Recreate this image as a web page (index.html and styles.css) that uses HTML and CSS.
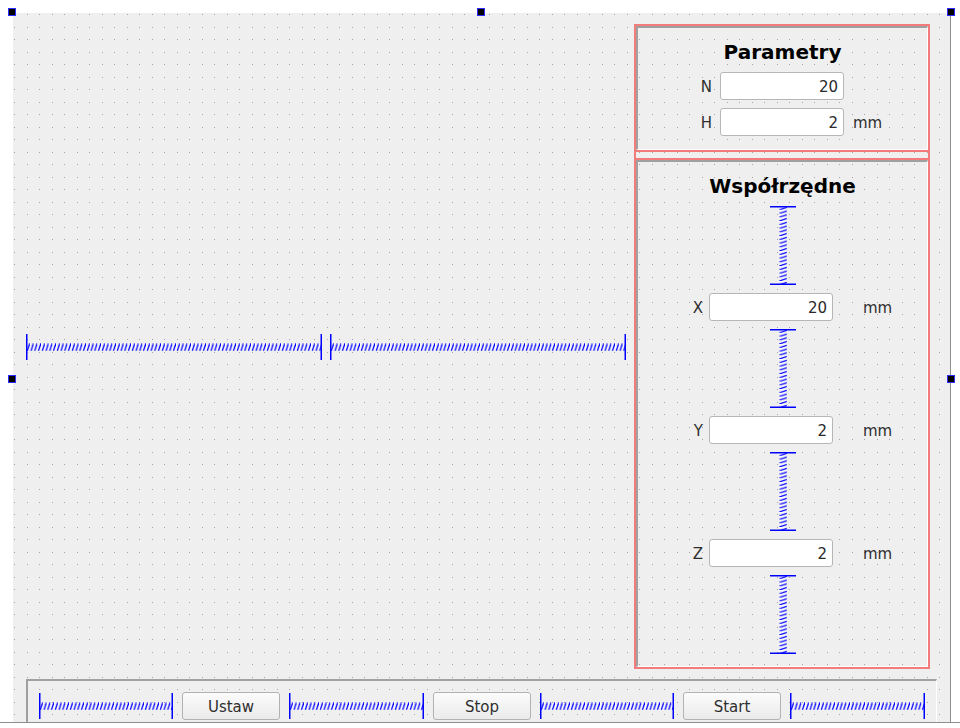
FILE: index.html
```html
<!DOCTYPE html>
<html lang="pl">
<head>
<meta charset="utf-8">
<title>Form</title>
<link rel="stylesheet" href="styles.css">
</head>
<body>
<svg class="defs" width="0" height="0" aria-hidden="true">
  <defs>
    <pattern id="hc" patternUnits="userSpaceOnUse" x="0" y="0" width="3.75" height="26">
      <line x1="0" y1="9.25" x2="1.25" y2="16.75" stroke="#ffffff" stroke-width="1.2"/>
      <line x1="1.25" y1="16.75" x2="3.75" y2="9.25" stroke="#0000ff" stroke-width="1.2"/>
    </pattern>
    <pattern id="vc" patternUnits="userSpaceOnUse" x="0" y="0" width="26" height="3.75">
      <line x1="9.25" y1="0" x2="16.75" y2="1.25" stroke="#ffffff" stroke-width="1.2"/>
      <line x1="16.75" y1="1.25" x2="9.25" y2="3.75" stroke="#0000ff" stroke-width="1.2"/>
    </pattern>
  </defs>
</svg>

<div class="viewport">
  <div class="form">
    <div class="main">
      <div class="left">
        <svg class="hs" width="296" height="26" viewBox="0 0 296 26"><rect x="0" y="8" width="296" height="10" fill="url(#hc)"/><line class="cap" x1="0.75" y1="0" x2="0.75" y2="26"/><line class="cap" x1="295.25" y1="0" x2="295.25" y2="26"/></svg>
        <svg class="hs" width="296" height="26" viewBox="0 0 296 26"><rect x="0" y="8" width="296" height="10" fill="url(#hc)"/><line class="cap" x1="0.75" y1="0" x2="0.75" y2="26"/><line class="cap" x1="295.25" y1="0" x2="295.25" y2="26"/></svg>
      </div>
      <div class="panel">
        <div class="box box1">
          <div class="frame">
            <div class="title">Parametry</div>
            <div class="pgrid">
              <span class="lbl">N</span><div class="input">20</div><span class="unit"></span>
              <span class="lbl">H</span><div class="input">2</div><span class="unit">mm</span>
            </div>
          </div>
        </div>
        <div class="box box2">
          <div class="frame">
            <div class="title">Współrzędne</div>
            <svg class="vs" width="26" height="79" viewBox="0 0 26 79"><rect x="8" y="0" width="10" height="79" fill="url(#vc)"/><line class="cap" x1="0" y1="0.75" x2="26" y2="0.75"/><line class="cap" x1="0" y1="78.25" x2="26" y2="78.25"/></svg>
            <div class="crow"><span class="lbl">X</span><div class="input">20</div><span class="unit">mm</span></div>
            <svg class="vs" width="26" height="79" viewBox="0 0 26 79"><rect x="8" y="0" width="10" height="79" fill="url(#vc)"/><line class="cap" x1="0" y1="0.75" x2="26" y2="0.75"/><line class="cap" x1="0" y1="78.25" x2="26" y2="78.25"/></svg>
            <div class="crow"><span class="lbl">Y</span><div class="input">2</div><span class="unit">mm</span></div>
            <svg class="vs" width="26" height="79" viewBox="0 0 26 79"><rect x="8" y="0" width="10" height="79" fill="url(#vc)"/><line class="cap" x1="0" y1="0.75" x2="26" y2="0.75"/><line class="cap" x1="0" y1="78.25" x2="26" y2="78.25"/></svg>
            <div class="crow"><span class="lbl">Z</span><div class="input">2</div><span class="unit">mm</span></div>
            <svg class="vs" width="26" height="79" viewBox="0 0 26 79"><rect x="8" y="0" width="10" height="79" fill="url(#vc)"/><line class="cap" x1="0" y1="0.75" x2="26" y2="0.75"/><line class="cap" x1="0" y1="78.25" x2="26" y2="78.25"/></svg>
          </div>
        </div>
      </div>
    </div>
    <div class="bottom">
      <svg class="bs" width="134" height="26" viewBox="0 0 134 26"><rect x="0" y="8" width="134" height="10" fill="url(#hc)"/><line class="cap" x1="0.75" y1="0" x2="0.75" y2="26"/><line class="cap" x1="133.25" y1="0" x2="133.25" y2="26"/></svg>
      <div class="btn">Ustaw</div>
      <svg class="bs" width="135" height="26" viewBox="0 0 135 26"><rect x="0" y="8" width="135" height="10" fill="url(#hc)"/><line class="cap" x1="0.75" y1="0" x2="0.75" y2="26"/><line class="cap" x1="134.25" y1="0" x2="134.25" y2="26"/></svg>
      <div class="btn">Stop</div>
      <svg class="bs" width="134" height="26" viewBox="0 0 134 26"><rect x="0" y="8" width="134" height="10" fill="url(#hc)"/><line class="cap" x1="0.75" y1="0" x2="0.75" y2="26"/><line class="cap" x1="133.25" y1="0" x2="133.25" y2="26"/></svg>
      <div class="btn">Start</div>
      <svg class="bs" width="135" height="26" viewBox="0 0 135 26"><rect x="0" y="8" width="135" height="10" fill="url(#hc)"/><line class="cap" x1="0.75" y1="0" x2="0.75" y2="26"/><line class="cap" x1="134.25" y1="0" x2="134.25" y2="26"/></svg>
    </div>
  </div>
</div>

<div class="handle h-tl"></div>
<div class="handle h-tm"></div>
<div class="handle h-tr"></div>
<div class="handle h-ml"></div>
<div class="handle h-mr"></div>
</body>
</html>
```

FILE: styles.css
```css
* { box-sizing: border-box; }

html, body {
  margin: 0;
  padding: 0;
}

body {
  position: relative;
  width: 960px;
  height: 728px;
  overflow: hidden;
  background: #ffffff;
  font-family: "DejaVu Sans", "Liberation Sans", sans-serif;
  font-size: 15px;
  color: #2e2e2e;
}

.defs {
  position: absolute;
  width: 0;
  height: 0;
  overflow: hidden;
}

.viewport {
  height: 723px;
  border-bottom: 1px solid #8e8e8e;
  padding: 13px 0 0 13px;
  overflow: hidden;
}

.form {
  width: 938px;
  height: 760px;
  border-right: 1px solid #8e8e8e;
  padding: 11px 0 0 13px;
  background-color: #efefef;
  background-image:
    radial-gradient(circle at 1.5px 1.5px, #a4a4a4 0.75px, transparent 0.76px),
    radial-gradient(circle at 1.5px 1.5px, #a4a4a4 0.75px, transparent 0.76px),
    radial-gradient(circle at 1.5px 1.5px, #a4a4a4 0.75px, transparent 0.76px),
    radial-gradient(circle at 1.5px 1.5px, #a4a4a4 0.75px, transparent 0.76px);
  background-size: 25px 25px;
  background-position: 0 0, 13px 0, 0 13px, 13px 13px;
}

.main {
  display: flex;
  height: 645px;
}

.left {
  width: 600px;
  display: flex;
  align-items: center;
  gap: 8px;
}

.hs, .bs, .vs { display: block; flex: none; }

.cap {
  stroke: #0000ff;
  stroke-width: 1.5;
}

.panel {
  margin-left: 8px;
  width: 296px;
  border: 2px solid #f27c7c;
  display: flex;
  flex-direction: column;
}

.box1 {
  height: 126px;
  border-bottom: 2px solid #f27c7c;
  display: flex;
}

.box2 {
  margin-top: 6px;
  border-top: 2px solid #f27c7c;
  flex: 1;
  display: flex;
}

.frame {
  flex: 1;
  display: flex;
  flex-direction: column;
  gap: 8px;
  padding-top: 12px;
  border-top: 2px solid #a0a0a0;
  border-left: 2px solid #a0a0a0;
  border-right: 1px solid #ffffff;
  border-bottom: 1px solid #ffffff;
}

.title {
  height: 24px;
  line-height: 24px;
  font-size: 20px;
  font-weight: bold;
  text-align: center;
  color: #000000;
}

.pgrid {
  display: grid;
  grid-template-columns: 82px 124px 1fr;
  grid-auto-rows: 28px;
  row-gap: 8px;
  align-items: center;
}

.pgrid .lbl { padding-right: 8px; }
.pgrid .unit { padding-left: 9px; }

.crow {
  display: grid;
  grid-template-columns: 71px 124px 1fr;
  height: 28px;
  align-items: center;
}

.crow .lbl { padding-right: 6px; }
.crow .unit { padding-left: 30px; }

.lbl, .unit {
  padding-top: 2px;
  color: #2e2e2e;
}

.lbl { text-align: right; }

.input {
  height: 28px;
  line-height: 28px;
  border: 1px solid #b6b6b6;
  border-radius: 3px;
  background: #ffffff;
  text-align: right;
  padding-right: 5px;
  color: #2a2a2a;
}

.vs {
  align-self: flex-start;
  margin-left: 132px;
  width: 26px;
  height: 79px;
}

.bottom {
  margin-top: 10px;
  width: 911px;
  height: 60px;
  border-top: 2px solid #a0a0a0;
  border-left: 2px solid #a0a0a0;
  border-right: 1px solid #ffffff;
  padding: 11px 0 0 11px;
  display: flex;
  align-items: flex-start;
  gap: 9px;
}

.bs { margin-top: 1px; }

.btn {
  flex: none;
  width: 98px;
  height: 28px;
  line-height: 28px;
  border: 1px solid #b2b2b2;
  border-radius: 3px;
  background: linear-gradient(#fbfbfb, #ebebeb);
  text-align: center;
  color: #2e2e2e;
}

.handle {
  position: absolute;
  width: 8px;
  height: 8px;
  background: #000000;
  border: 1px solid #2b2bff;
}

.h-tl { left: 8px; top: 8px; }
.h-tm { left: 477px; top: 8px; }
.h-tr { left: 947px; top: 8px; }
.h-ml { left: 8px; top: 375px; }
.h-mr { left: 947px; top: 375px; }
```
